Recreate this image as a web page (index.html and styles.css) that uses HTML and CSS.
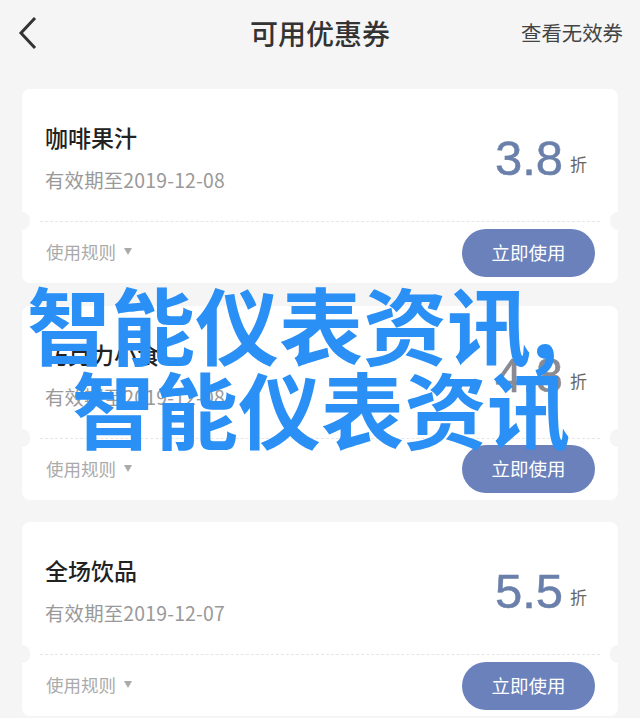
FILE: index.html
```html
<!DOCTYPE html>
<html lang="zh-CN">
<head>
    <meta charset="UTF-8">
    <meta name="viewport" content="width=device-width, initial-scale=1.0">
    <title>可用优惠券</title>
    <link rel="stylesheet" href="styles.css">
</head>
<body>
    <div class="page">
        <header class="topbar">
            <svg class="back" width="20" height="34" viewBox="0 0 20 34">
                <path d="M17 2 L3 17 L17 32" fill="none" stroke="#333" stroke-width="3"/>
            </svg>
            <h1>可用优惠券</h1>
            <a class="invalid">查看无效券</a>
        </header>

        <div class="card">
            <div class="card-main">
                <div class="info">
                    <div class="name">咖啡果汁</div>
                    <div class="date">有效期至2019-12-08</div>
                </div>
                <div class="discount"><span class="num">3.8</span><span class="unit">折</span></div>
            </div>
            <div class="tear"></div>
            <div class="card-foot">
                <span class="rules">使用规则<i class="arrow"></i></span>
                <button class="use">立即使用</button>
            </div>
        </div>

        <div class="card">
            <div class="card-main">
                <div class="info">
                    <div class="name">巧克力小食</div>
                    <div class="date">有效期至2019-12-08</div>
                </div>
                <div class="discount"><span class="num gray">4.8</span><span class="unit">折</span></div>
            </div>
            <div class="tear"></div>
            <div class="card-foot">
                <span class="rules">使用规则<i class="arrow"></i></span>
                <button class="use">立即使用</button>
            </div>
        </div>

        <div class="card">
            <div class="card-main">
                <div class="info">
                    <div class="name">全场饮品</div>
                    <div class="date">有效期至2019-12-07</div>
                </div>
                <div class="discount"><span class="num">5.5</span><span class="unit">折</span></div>
            </div>
            <div class="tear"></div>
            <div class="card-foot">
                <span class="rules">使用规则<i class="arrow"></i></span>
                <button class="use">立即使用</button>
            </div>
        </div>

        <div class="watermark">
            <div class="line-one">智能仪表资讯,</div>
            <div class="line-two">智能仪表资讯</div>
        </div>
    </div>
</body>
</html>
```

FILE: styles.css
```css
* {
    box-sizing: border-box;
}

body {
    margin: 0;
    background-color: #f5f5f5;
    font-family: "Noto Sans CJK SC", "Liberation Sans", sans-serif;
}

.page {
    position: relative;
    width: 640px;
    height: 718px;
    overflow: hidden;
    padding: 0 22px;
}

.topbar {
    position: relative;
    display: flex;
    align-items: center;
    justify-content: center;
    height: 66px;
    margin-bottom: 23px;
}

.back {
    position: absolute;
    left: -4px;
    top: 16px;
}

h1 {
    margin: 0;
    font-size: 28px;
    font-weight: 500;
    color: #333;
}

.invalid {
    position: absolute;
    right: -5px;
    top: 17px;
    font-size: 20.4px;
    line-height: 30px;
    color: #444;
}

.card {
    height: 194px;
    margin-bottom: 22.5px;
    background-color: white;
    border-radius: 8px;
}

.card-main {
    display: flex;
    justify-content: space-between;
    height: 132px;
    padding: 31px 31px 0 23px;
}

/* tear line with the notches at both ends */
.tear {
    position: relative;
    height: 1px;
    margin: 0 18px;
    border-top: 1px dashed #e6e6e6;
}

.tear::before,
.tear::after {
    content: "";
    position: absolute;
    top: -10px;
    width: 8px;
    height: 18px;
    background-color: #f5f5f5;
}

.tear::before {
    left: -18px;
    border-radius: 0 9px 9px 0;
}

.tear::after {
    right: -18px;
    border-radius: 9px 0 0 9px;
}

.name {
    font-size: 23px;
    line-height: 34px;
    font-weight: 500;
    color: #222;
}

.date {
    margin-top: 12px;
    font-size: 19.4px;
    line-height: 28px;
    letter-spacing: 0.2px;
    color: #999;
}

.discount {
    display: flex;
    align-items: baseline;
    padding-top: 10px;
}

.num {
    font-family: "Liberation Sans", sans-serif;
    font-size: 49px;
    line-height: 56px;
    color: #6a80aa;
    -webkit-text-stroke: 0.5px #6a80aa;
}

.num.gray {
    color: #8a8a92;
    -webkit-text-stroke: 0.5px #8a8a92;
}

.unit {
    position: relative;
    top: -4px;
    margin-left: 7px;
    font-size: 17px;
    color: #666;
}

.card-foot {
    display: flex;
    align-items: center;
    justify-content: space-between;
    height: 61px;
    padding: 0 23px 0 24px;
}

.rules {
    display: flex;
    align-items: center;
    padding-bottom: 2px;
    font-size: 17.5px;
    color: #aaa;
}

.arrow {
    width: 0;
    height: 0;
    margin-left: 8px;
    border-left: 4px solid transparent;
    border-right: 4px solid transparent;
    border-top: 7px solid #aaa;
}

.use {
    width: 133px;
    height: 48px;
    padding: 0 0 2px;
    border: none;
    border-radius: 24px;
    background-color: #6a81bb;
    color: white;
    font-family: inherit;
    font-size: 18.5px;
}

.watermark {
    position: absolute;
    left: 0;
    top: 0;
    font-size: 84px;
    line-height: 84px;
    font-weight: 700;
    color: #2a90f5;
    white-space: nowrap;
}

.line-one {
    margin: 281px 0 0 27px;
}

.line-two {
    margin-left: 72px;
    font-size: 83px;
}
```
